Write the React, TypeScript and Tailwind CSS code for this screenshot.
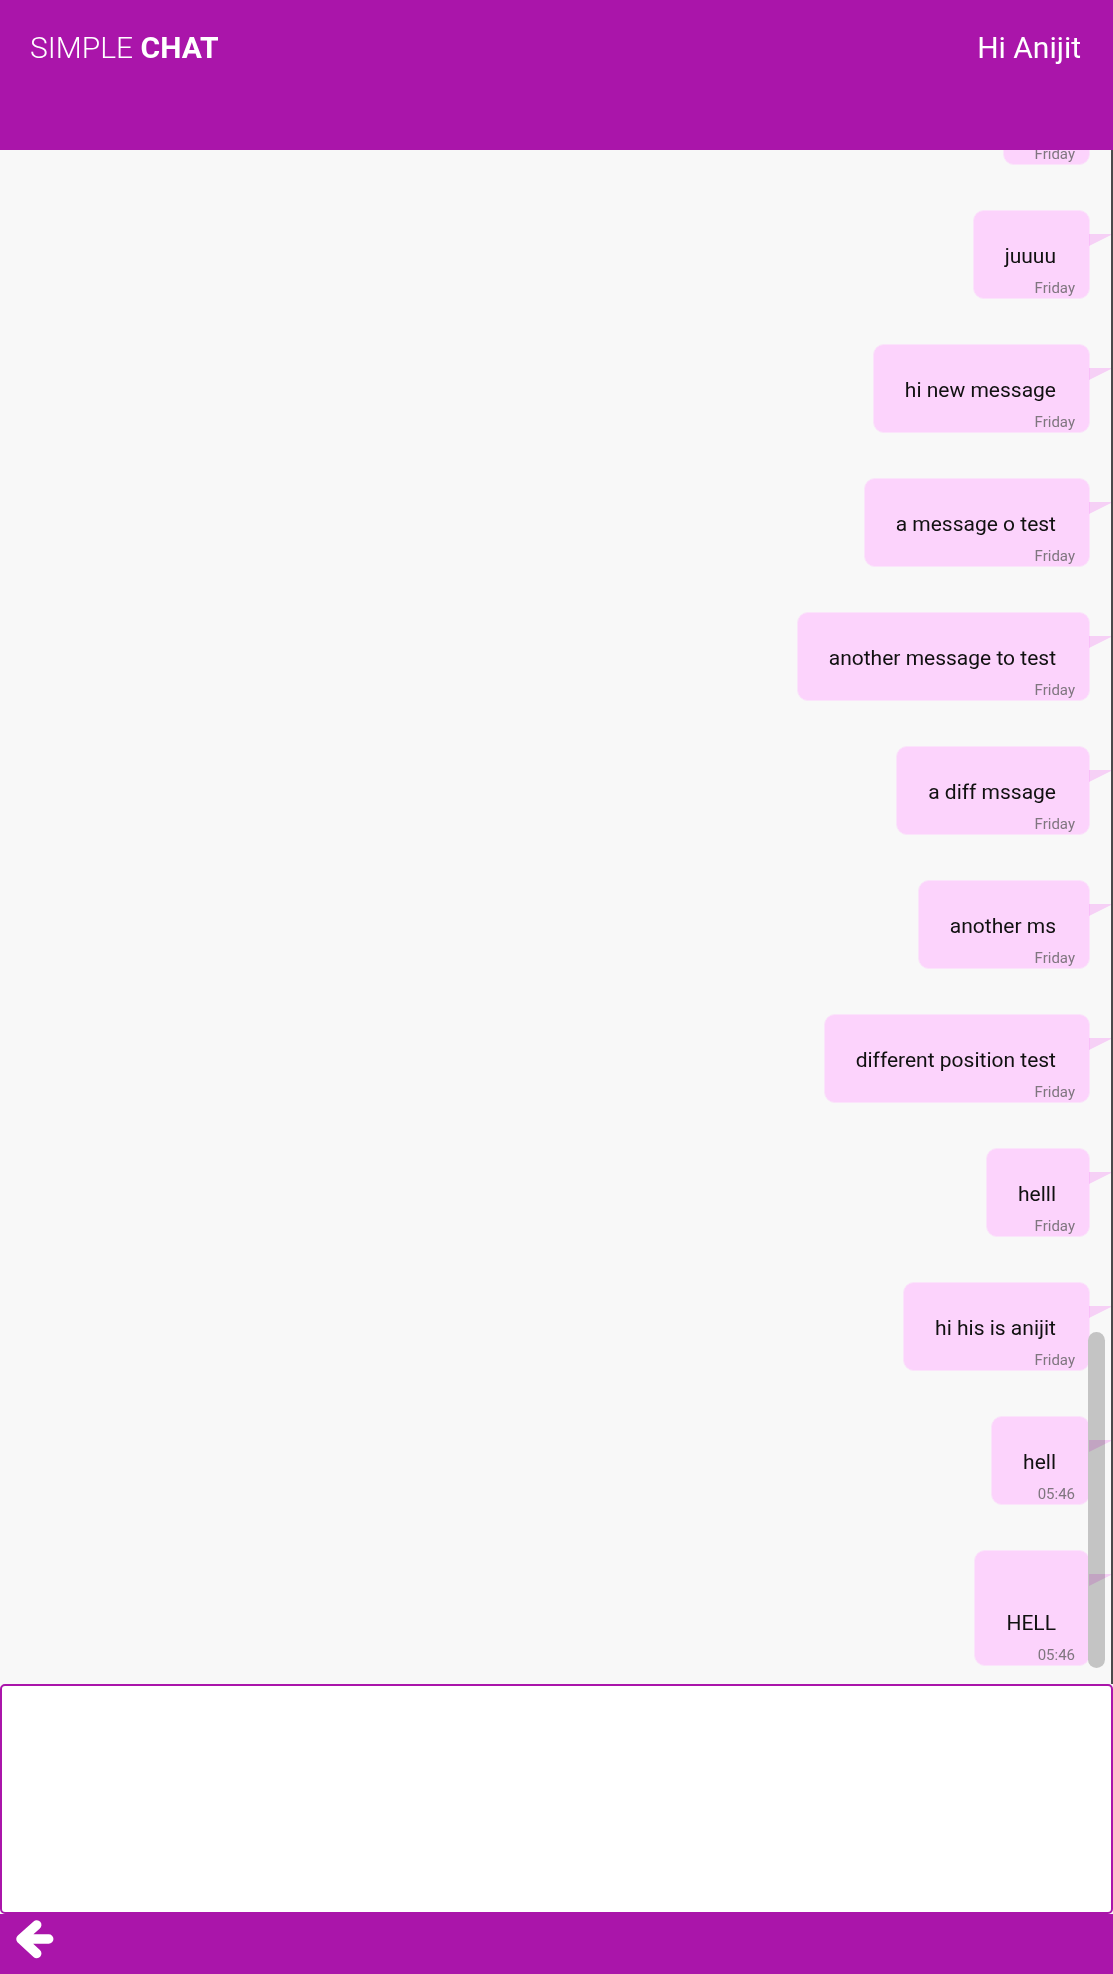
import { useState } from 'react';

type Message = {
  id: number;
  text: string;
  time: string;
  extraTop?: boolean;
};

const messages: Message[] = [
  { id: 1, text: 'hi', time: 'Friday' },
  { id: 2, text: 'juuuu', time: 'Friday' },
  { id: 3, text: 'hi new message', time: 'Friday' },
  { id: 4, text: 'a message o test', time: 'Friday' },
  { id: 5, text: 'another message to test', time: 'Friday' },
  { id: 6, text: 'a diff mssage', time: 'Friday' },
  { id: 7, text: 'another ms', time: 'Friday' },
  { id: 8, text: 'different position test', time: 'Friday' },
  { id: 9, text: 'helll', time: 'Friday' },
  { id: 10, text: 'hi his is anijit', time: 'Friday' },
  { id: 11, text: 'hell', time: '05:46' },
  { id: 12, text: 'HELL', time: '05:46', extraTop: true },
];

function Bubble({ msg }: { msg: Message }) {
  return (
    <div className="flex justify-end mr-[21px]">
      <div
        className={`relative bg-[#fcd3fc] border border-[#fbe4fb] rounded-[11px] pl-[31px] pr-[14px] ${
          msg.extraTop ? 'pt-[57px]' : 'pt-[30px]'
        }`}
      >
        <div className="pr-[19px] text-[21px] leading-[30px] text-[#111]">{msg.text}</div>
        <div className="mt-[7px] text-right text-[15px] leading-[20px] text-[#7f767f]">{msg.time}</div>
        {/* tail */}
        <div className="absolute left-full top-[23px] z-20 w-0 h-0 border-t-[12px] border-t-[#fdd6fd] border-r-[24px] border-r-transparent mix-blend-multiply" />
      </div>
    </div>
  );
}

function BackArrow() {
  return (
    <svg width="60" height="60" viewBox="0 0 60 60" className="block">
      <path
        d="M36.7 11 L21 25 L36.7 39.5 M21 25 L48.7 25"
        fill="none"
        stroke="#ffffff"
        strokeWidth="9.5"
        strokeLinecap="round"
        strokeLinejoin="round"
      />
    </svg>
  );
}

export default function App() {
  const [draft, setDraft] = useState('');

  return (
    <div
      className="flex flex-col h-[1974px] w-full bg-[#f8f8f8]"
      style={{ fontFamily: 'Roboto, "Noto Sans", sans-serif' }}
    >
      {/* Header */}
      <header className="h-[150px] shrink-0 bg-[#aa15aa] text-white flex justify-between pt-[30px] pl-[30px] pr-[32px]">
        <div className="text-[30px] leading-[36px]">
          <span className="font-light">SIMPLE</span> <span className="font-bold">CHAT</span>
        </div>
        <div className="text-[30px] leading-[36px]">Hi Anijit</div>
      </header>

      {/* Messages */}
      <div className="relative flex-1 overflow-hidden border-r-2 border-[#4a4a4a]">
        <div className="flex flex-col justify-end gap-[45px] h-full pb-[18px]">
          {messages.map((m) => (
            <Bubble key={m.id} msg={m} />
          ))}
        </div>
        {/* scrollbar thumb */}
        <div className="absolute right-[6px] bottom-[16px] w-[17px] h-[336px] rounded-full bg-[#c4c4c4] z-10" />
      </div>

      {/* Input */}
      <textarea
        value={draft}
        onChange={(e) => setDraft(e.target.value)}
        className="h-[230px] shrink-0 w-full resize-none bg-white border-2 border-[#aa15aa] rounded-[5px] outline-none p-2 text-[18px]"
      />

      {/* Footer */}
      <footer className="h-[60px] shrink-0 bg-[#aa15aa] flex items-start">
        <BackArrow />
      </footer>
    </div>
  );
}
